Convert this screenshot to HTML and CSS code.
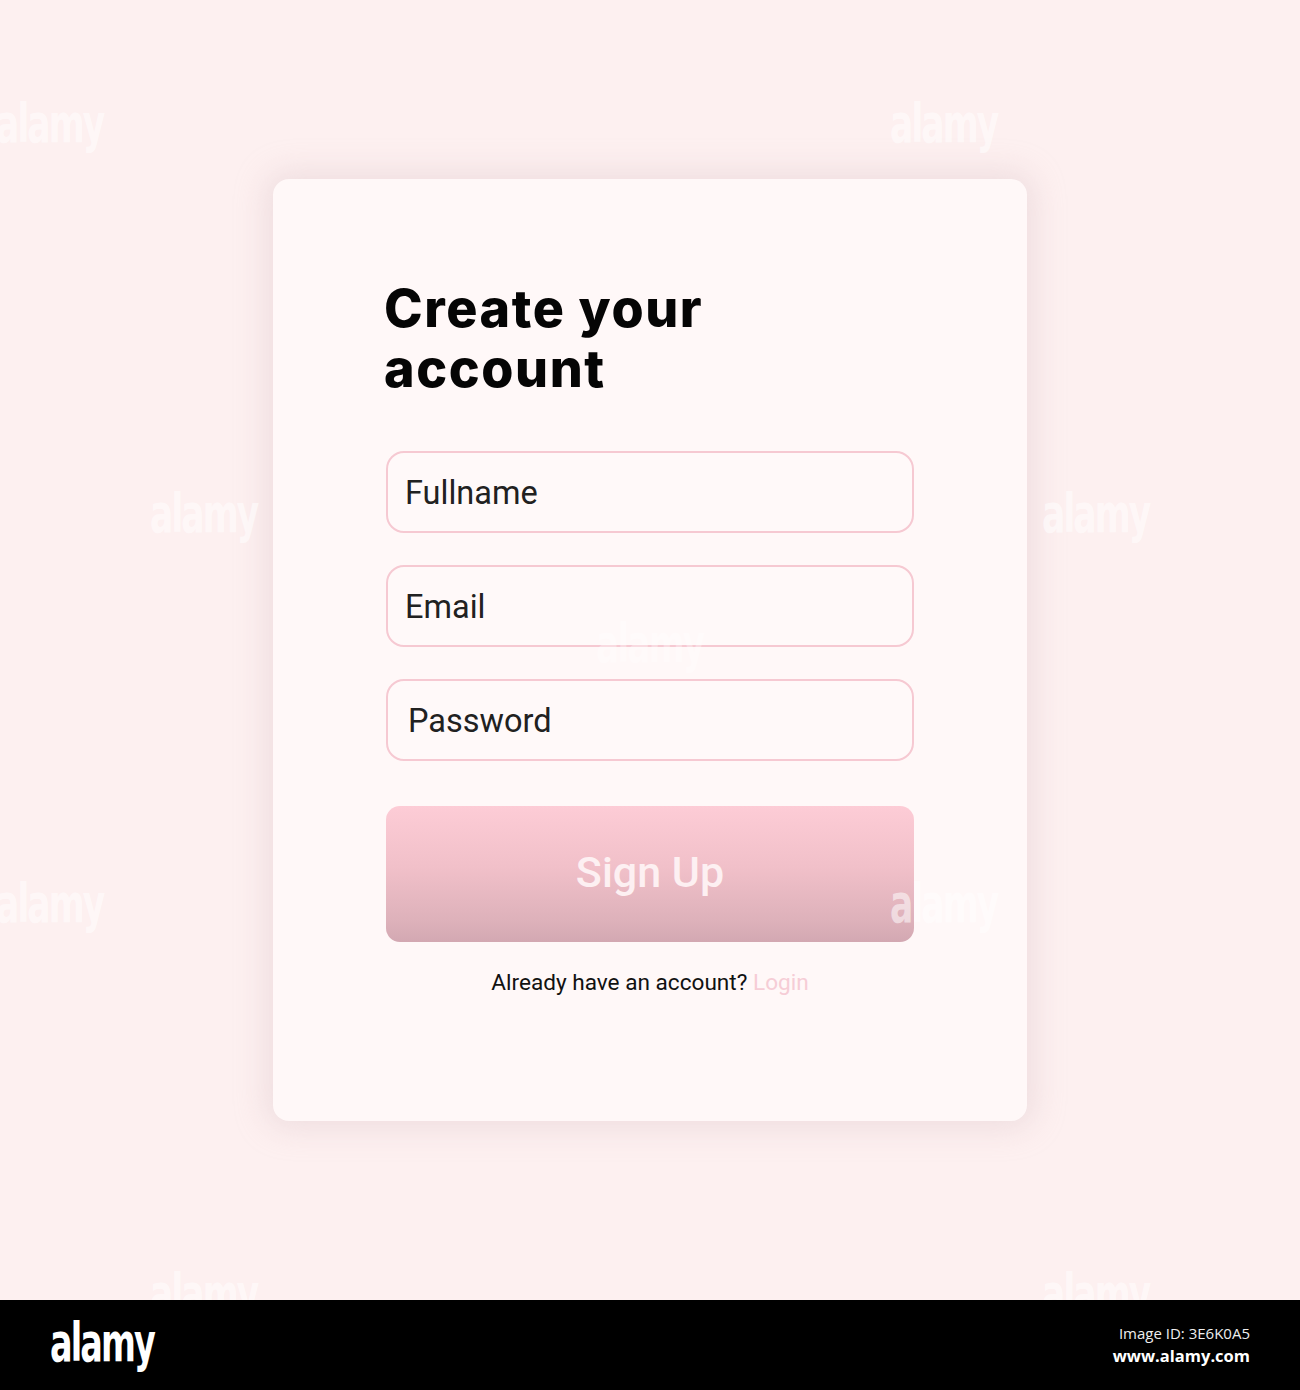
FILE: index.html
```html
<!DOCTYPE html>
<html lang="en">
<head>
<meta charset="utf-8">
<title>Create your account</title>
<link rel="stylesheet" href="styles.css">
</head>
<body>
<main class="page">
  <section class="card">
    <h1 class="title">Create your<br>account</h1>
    <form class="form">
      <div class="field">Fullname</div>
      <div class="field">Email</div>
      <div class="field field-pw">Password</div>
      <button type="button" class="btn">Sign Up</button>
      <p class="alt">Already have an account? <span class="login">Login</span></p>
    </form>
  </section>
  <div class="wm-layer" aria-hidden="true">
    <span class="wm" style="left:-4px;top:94px">alamy</span>
    <span class="wm" style="left:890px;top:94px">alamy</span>
    <span class="wm" style="left:150px;top:484px">alamy</span>
    <span class="wm" style="left:1042px;top:484px">alamy</span>
    <span class="wm" style="left:-4px;top:874px">alamy</span>
    <span class="wm" style="left:890px;top:874px">alamy</span>
    <span class="wm wm-faint" style="left:596px;top:614px">alamy</span>
    <span class="wm" style="left:150px;top:1264px">alamy</span>
    <span class="wm" style="left:1042px;top:1264px">alamy</span>
  </div>
</main>
<footer class="bar">
  <div class="logo">alamy</div>
  <div class="meta">
    <div class="id">Image ID: 3E6K0A5</div>
    <div class="url">www.alamy.com</div>
  </div>
</footer>
</body>
</html>
```
FILE: styles.css
```css
html, body {
  margin: 0;
  padding: 0;
}
body {
  width: 1300px;
  height: 1390px;
  overflow: hidden;
  background: #fdf0f0;
  font-family: Roboto, "Liberation Sans", sans-serif;
}
.page {
  position: relative;
  height: 1300px;
  box-sizing: border-box;
  padding-top: 179px;
  display: flex;
  justify-content: center;
  align-items: flex-start;
  overflow: hidden;
}
.card {
  width: 754px;
  height: 942px;
  box-sizing: border-box;
  background: #fff8f8;
  border-radius: 16px;
  box-shadow: 0 0 30px 8px rgba(215, 190, 195, 0.35);
  padding: 100px 113px 0 113px;
}
.title {
  margin: 0 0 0 -2px;
  font-family: Inter, "DejaVu Sans", sans-serif;
  font-weight: 800;
  font-size: 52px;
  line-height: 60px;
  color: #050505;
  letter-spacing: 1.6px;
}
.form {
  margin-top: 52px;
  display: flex;
  flex-direction: column;
}
.field {
  height: 82px;
  box-sizing: border-box;
  border: 2px solid #f6c9d2;
  border-radius: 18px;
  background: #fff9f9;
  padding-left: 17px;
  padding-top: 2px;
  display: flex;
  align-items: center;
  font-size: 32.5px;
  color: #212121;
  margin-bottom: 32px;
}
.field-pw {
  padding-left: 20px;
  margin-bottom: 45px;
}
.btn {
  height: 136px;
  width: 100%;
  border: none;
  border-radius: 14px;
  background: linear-gradient(to bottom, #fdccd6 0%, #f1c0c9 45%, #ddb1ba 85%, #d3a8b2 100%);
  color: #fdf0f2;
  font-family: Roboto, "Liberation Sans", sans-serif;
  font-weight: 500;
  font-size: 43px;
  padding: 0 0 4px 0;
  cursor: pointer;
}
.alt {
  margin: 27px 0 0 0;
  text-align: center;
  font-size: 22.6px;
  color: #111;
}
.login {
  color: #f6cdd6;
}
.wm-layer {
  position: absolute;
  inset: 0;
  pointer-events: none;
}
.wm {
  position: absolute;
  font-family: "DejaVu Sans", sans-serif;
  font-weight: 700;
  font-size: 54px;
  line-height: 60px;
  letter-spacing: -3px;
  color: rgba(255, 255, 255, 0.55);
  transform: scaleX(0.64);
  transform-origin: left top;
}
.wm-faint {
  color: rgba(255, 255, 255, 0.35);
}
.bar {
  height: 90px;
  background: #000;
  display: flex;
  justify-content: space-between;
  align-items: center;
  padding: 0 50px;
}
.logo {
  font-family: "DejaVu Sans", sans-serif;
  font-weight: 700;
  font-size: 54px;
  letter-spacing: -3px;
  color: #fff;
  transform: scaleX(0.62);
  transform-origin: left center;
  margin-top: -6px;
}
.meta {
  text-align: right;
  font-family: "Open Sans", "DejaVu Sans", sans-serif;
  color: #eee;
}
.id {
  font-size: 15px;
  line-height: 22px;
}
.url {
  font-size: 16.5px;
  font-weight: 700;
  line-height: 24px;
  color: #fff;
}
```
